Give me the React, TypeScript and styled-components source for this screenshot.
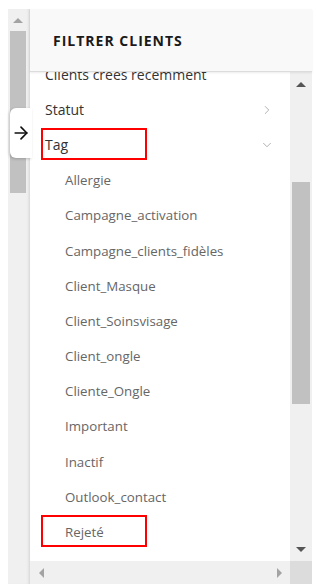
import React from "react";
import styled, { createGlobalStyle } from "styled-components";
import { ArrowRight, ChevronRight, ChevronDown } from "lucide-react";

const GlobalStyle = createGlobalStyle`
  html, body {
    margin: 0;
    padding: 0;
    background: #ffffff;
    font-family: "Open Sans", "Noto Sans", sans-serif;
  }
`;

const Page = styled.div`
  position: relative;
  display: flex;
  width: 315px;
  height: 584px;
  padding: 9px 3px 0 8px;
  box-sizing: border-box;
  overflow: hidden;
`;

const SideTrack = styled.div`
  width: 20px;
  display: flex;
  flex-direction: column;
  background: #f0f0f0;
  box-shadow: inset -3px 0 3px -2px rgba(0, 0, 0, 0.12);
  padding-right: 2px;
`;

const ArrowCell = styled.div<{ $h?: number }>`
  height: ${(p) => p.$h ?? 22}px;
  display: flex;
  align-items: center;
  justify-content: center;
  flex-shrink: 0;
`;

const Triangle = styled.div<{ $dir: "up" | "down" | "left" | "right"; $color?: string }>`
  width: 0;
  height: 0;
  ${(p) => {
    const c = p.$color ?? "#555";
    switch (p.$dir) {
      case "up":
        return `border-left: 5px solid transparent; border-right: 5px solid transparent; border-bottom: 5px solid ${c};`;
      case "down":
        return `border-left: 5px solid transparent; border-right: 5px solid transparent; border-top: 5px solid ${c};`;
      case "left":
        return `border-top: 5px solid transparent; border-bottom: 5px solid transparent; border-right: 5px solid ${c};`;
      default:
        return `border-top: 5px solid transparent; border-bottom: 5px solid transparent; border-left: 5px solid ${c};`;
    }
  }}
`;

const Thumb = styled.div<{ $h: number; $top?: number }>`
  height: ${(p) => p.$h}px;
  margin: ${(p) => p.$top ?? 0}px 2px 0 2px;
  background: #c1c1c1;
  flex-shrink: 0;
`;

const Panel = styled.div`
  flex: 1;
  display: flex;
  flex-direction: column;
  background: #ffffff;
  min-width: 0;
`;

const Header = styled.div`
  height: 62px;
  flex-shrink: 0;
  display: flex;
  align-items: center;
  padding-left: 23px;
  background: #f9f9f9;
  border-bottom: 1px solid #dcdcdc;
  box-shadow: 0 1px 2px rgba(0, 0, 0, 0.08);
  position: relative;
  z-index: 1;
`;

const Title = styled.h1`
  margin: 0;
  font-size: 14px;
  font-weight: 700;
  letter-spacing: 1px;
  color: #1a1a1a;
`;

const Body = styled.div`
  flex: 1;
  display: flex;
  min-height: 0;
`;

const List = styled.div`
  flex: 1;
  overflow: hidden;
  position: relative;
  margin-top: -15px;
`;

const Row = styled.div<{ $sub?: boolean }>`
  height: 35.2px;
  display: flex;
  align-items: center;
  justify-content: space-between;
  padding: 0 16px 0 ${(p) => (p.$sub ? 35 : 15)}px;
  font-size: ${(p) => (p.$sub ? 13.3 : 14)}px;
  color: ${(p) => (p.$sub ? "#666" : "#333")};
  white-space: nowrap;
  position: relative;
`;

const Mark = styled.span`
  position: absolute;
  left: 11px;
  top: 1px;
  width: 106px;
  height: 32px;
  border: 2px solid #ff0000;
  box-sizing: border-box;
`;

const Chevron = styled.span`
  display: flex;
  color: #a0a0a0;
`;

const VTrack = styled.div`
  width: 22px;
  display: flex;
  flex-direction: column;
  background: #f0f0f0;
`;

const Spacer = styled.div`
  flex: 1;
`;

const Bottom = styled.div`
  height: 23px;
  flex-shrink: 0;
  display: flex;
`;

const HTrack = styled.div`
  flex: 1;
  display: flex;
  align-items: center;
  justify-content: space-between;
  padding: 0 8px 0 9px;
  background: #f0f0f0;
`;

const Corner = styled.div`
  width: 22px;
  background: #dcdcdc;
`;

const Toggle = styled.div`
  position: absolute;
  left: 10px;
  top: 108px;
  width: 22px;
  height: 50px;
  background: #ffffff;
  border-radius: 6px 0 0 6px;
  box-shadow: -1px 1px 3px rgba(0, 0, 0, 0.2);
  display: flex;
  align-items: center;
  justify-content: center;
  z-index: 2;
`;

const tags = [
  "Allergie",
  "Campagne_activation",
  "Campagne_clients_fidèles",
  "Client_Masque",
  "Client_Soinsvisage",
  "Client_ongle",
  "Cliente_Ongle",
  "Important",
  "Inactif",
  "Outlook_contact",
  "Rejeté",
];

const App = () => {
  return (
    <Page>
      <GlobalStyle />
      <SideTrack>
        <ArrowCell>
          <Triangle $dir="up" $color="#a3a3a3" />
        </ArrowCell>
        <Thumb $h={162} />
      </SideTrack>
      <Toggle>
        <ArrowRight size={20} strokeWidth={2} color="#111" />
      </Toggle>
      <Panel>
        <Header>
          <Title>FILTRER CLIENTS</Title>
        </Header>
        <Body>
          <List>
            <Row>Clients créés récemment</Row>
            <Row>
              Statut
              <Chevron>
                <ChevronRight size={14} strokeWidth={1.4} />
              </Chevron>
            </Row>
            <Row>
              <Mark />
              Tag
              <Chevron>
                <ChevronDown size={14} strokeWidth={1.4} />
              </Chevron>
            </Row>
            {tags.map((t) => (
              <Row key={t} $sub>
                {t === "Rejeté" && <Mark />}
                {t}
              </Row>
            ))}
          </List>
          <VTrack>
            <ArrowCell $h={24}>
              <Triangle $dir="up" />
            </ArrowCell>
            <Thumb $h={222} $top={86} />
            <Spacer />
            <ArrowCell $h={24}>
              <Triangle $dir="down" />
            </ArrowCell>
          </VTrack>
        </Body>
        <Bottom>
          <HTrack>
            <Triangle $dir="left" $color="#a3a3a3" />
            <Triangle $dir="right" $color="#a3a3a3" />
          </HTrack>
          <Corner />
        </Bottom>
      </Panel>
    </Page>
  );
};

export default App;
